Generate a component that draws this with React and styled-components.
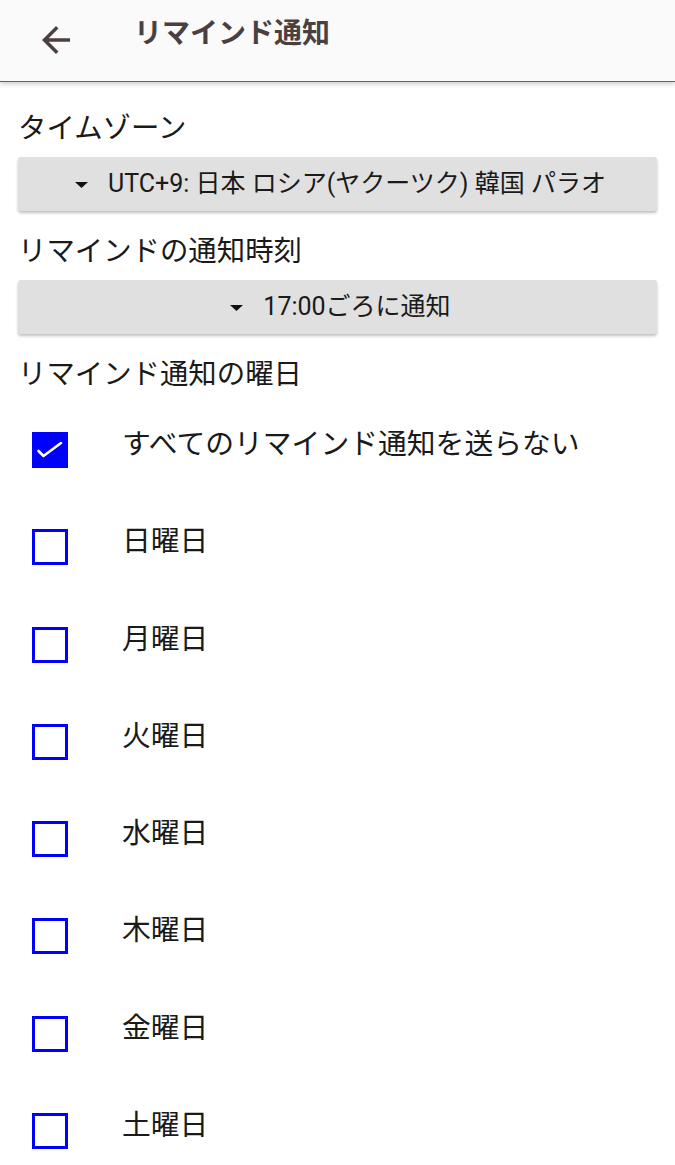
import React from "react";
import styled, { createGlobalStyle } from "styled-components";

const Global = createGlobalStyle`
  html, body { margin: 0; padding: 0; background: #ffffff; }
  body { font-family: "Roboto", "Noto Sans CJK JP", sans-serif; }
  * { box-sizing: border-box; }
`;

const Page = styled.div`
  width: 675px;
  min-height: 1165px;
  background: #ffffff;
  overflow: hidden;
`;

const Header = styled.header`
  height: 82px;
  background: #fafafa;
  border-bottom: 1px solid #4a5bc8;
  box-shadow: 0 2px 5px rgba(0, 0, 0, 0.2);
  display: flex;
  align-items: flex-start;
  padding-left: 35px;
  position: relative;
  z-index: 1;
`;

const BackButton = styled.button`
  width: 42px;
  height: 42px;
  margin-top: 19px;
  padding: 0;
  border: 0;
  background: transparent;
  display: flex;
  align-items: center;
  justify-content: center;
  color: #4a4040;
`;

const Title = styled.h1`
  margin: 20px 0 0 57px;
  font-family: "Roboto", "Noto Sans CJK JP", sans-serif;
  font-size: 28px;
  line-height: 28px;
  font-weight: 700;
  color: #4a4040;
`;

const Content = styled.main`
  padding: 6px 18px 0 18px;
  display: flex;
  flex-direction: column;
`;

const Label = styled.div`
  margin: 27px 0 14px 0;
  font-size: 28.4px;
  line-height: 28px;
  color: #1a1a1a;
`;

const Select = styled.div`
  height: 54px;
  background: #e0e0e0;
  border-radius: 3px;
  box-shadow: 0 2px 3px rgba(0, 0, 0, 0.25);
  display: flex;
  align-items: center;
  justify-content: center;
  padding-left: 6px;
  font-size: 25px;
  line-height: 28px;
  color: #1a1a1a;
`;

const Caret = styled.svg`
  width: 13px;
  height: 6px;
  margin-right: 20px;
  margin-top: 2px;
  flex-shrink: 0;
`;

const List = styled.div`
  margin-top: 17px;
  display: flex;
  flex-direction: column;
`;

const Row = styled.label`
  height: 97.3px;
  display: flex;
  align-items: flex-start;
  padding-left: 14px;
`;

const Box = styled.span`
  width: 36px;
  height: 36px;
  flex-shrink: 0;
  margin-top: 12px;
  border: 3px solid #0000ff;
  background: ${(p) => (p.$checked ? "#0000ff" : "#ffffff")};
  display: flex;
  align-items: center;
  justify-content: center;
`;

const RowText = styled.span`
  margin: 10px 0 0 54px;
  font-size: 28.8px;
  line-height: 28px;
  color: #1a1a1a;
`;

const ArrowBack = () => (
  <svg width="42" height="42" viewBox="0 0 24 24" fill="currentColor">
    <path d="M20 11H7.83l5.59-5.59L12 4l-8 8 8 8 1.41-1.41L7.83 13H20v-2z" />
  </svg>
);

const DropCaret = () => (
  <Caret viewBox="0 0 13 6">
    <path d="M0 0h13L6.5 6z" fill="#111" />
  </Caret>
);

const CheckMark = () => (
  <svg width="36" height="36" viewBox="0 0 36 36" style={{ margin: -3 }}>
    <path d="M6.5 19l5 5L29 11" fill="none" stroke="#fff" strokeWidth="2.6" strokeLinecap="round" strokeLinejoin="round" />
  </svg>
);

const days = [
  { label: "すべてのリマインド通知を送らない", checked: true },
  { label: "日曜日" },
  { label: "月曜日" },
  { label: "火曜日" },
  { label: "水曜日" },
  { label: "木曜日" },
  { label: "金曜日" },
  { label: "土曜日" },
];

export default function App() {
  return (
    <Page>
      <Global />
      <Header>
        <BackButton aria-label="戻る">
          <ArrowBack />
        </BackButton>
        <Title>リマインド通知</Title>
      </Header>
      <Content>
        <Label>タイムゾーン</Label>
        <Select>
          <DropCaret />
          <span>UTC+9: 日本 ロシア(ヤクーツク) 韓国 パラオ</span>
        </Select>
        <Label>リマインドの通知時刻</Label>
        <Select>
          <DropCaret />
          <span>17:00ごろに通知</span>
        </Select>
        <Label>リマインド通知の曜日</Label>
        <List>
          {days.map((d) => (
            <Row key={d.label}>
              <Box $checked={d.checked}>{d.checked && <CheckMark />}</Box>
              <RowText>{d.label}</RowText>
            </Row>
          ))}
        </List>
      </Content>
    </Page>
  );
}
